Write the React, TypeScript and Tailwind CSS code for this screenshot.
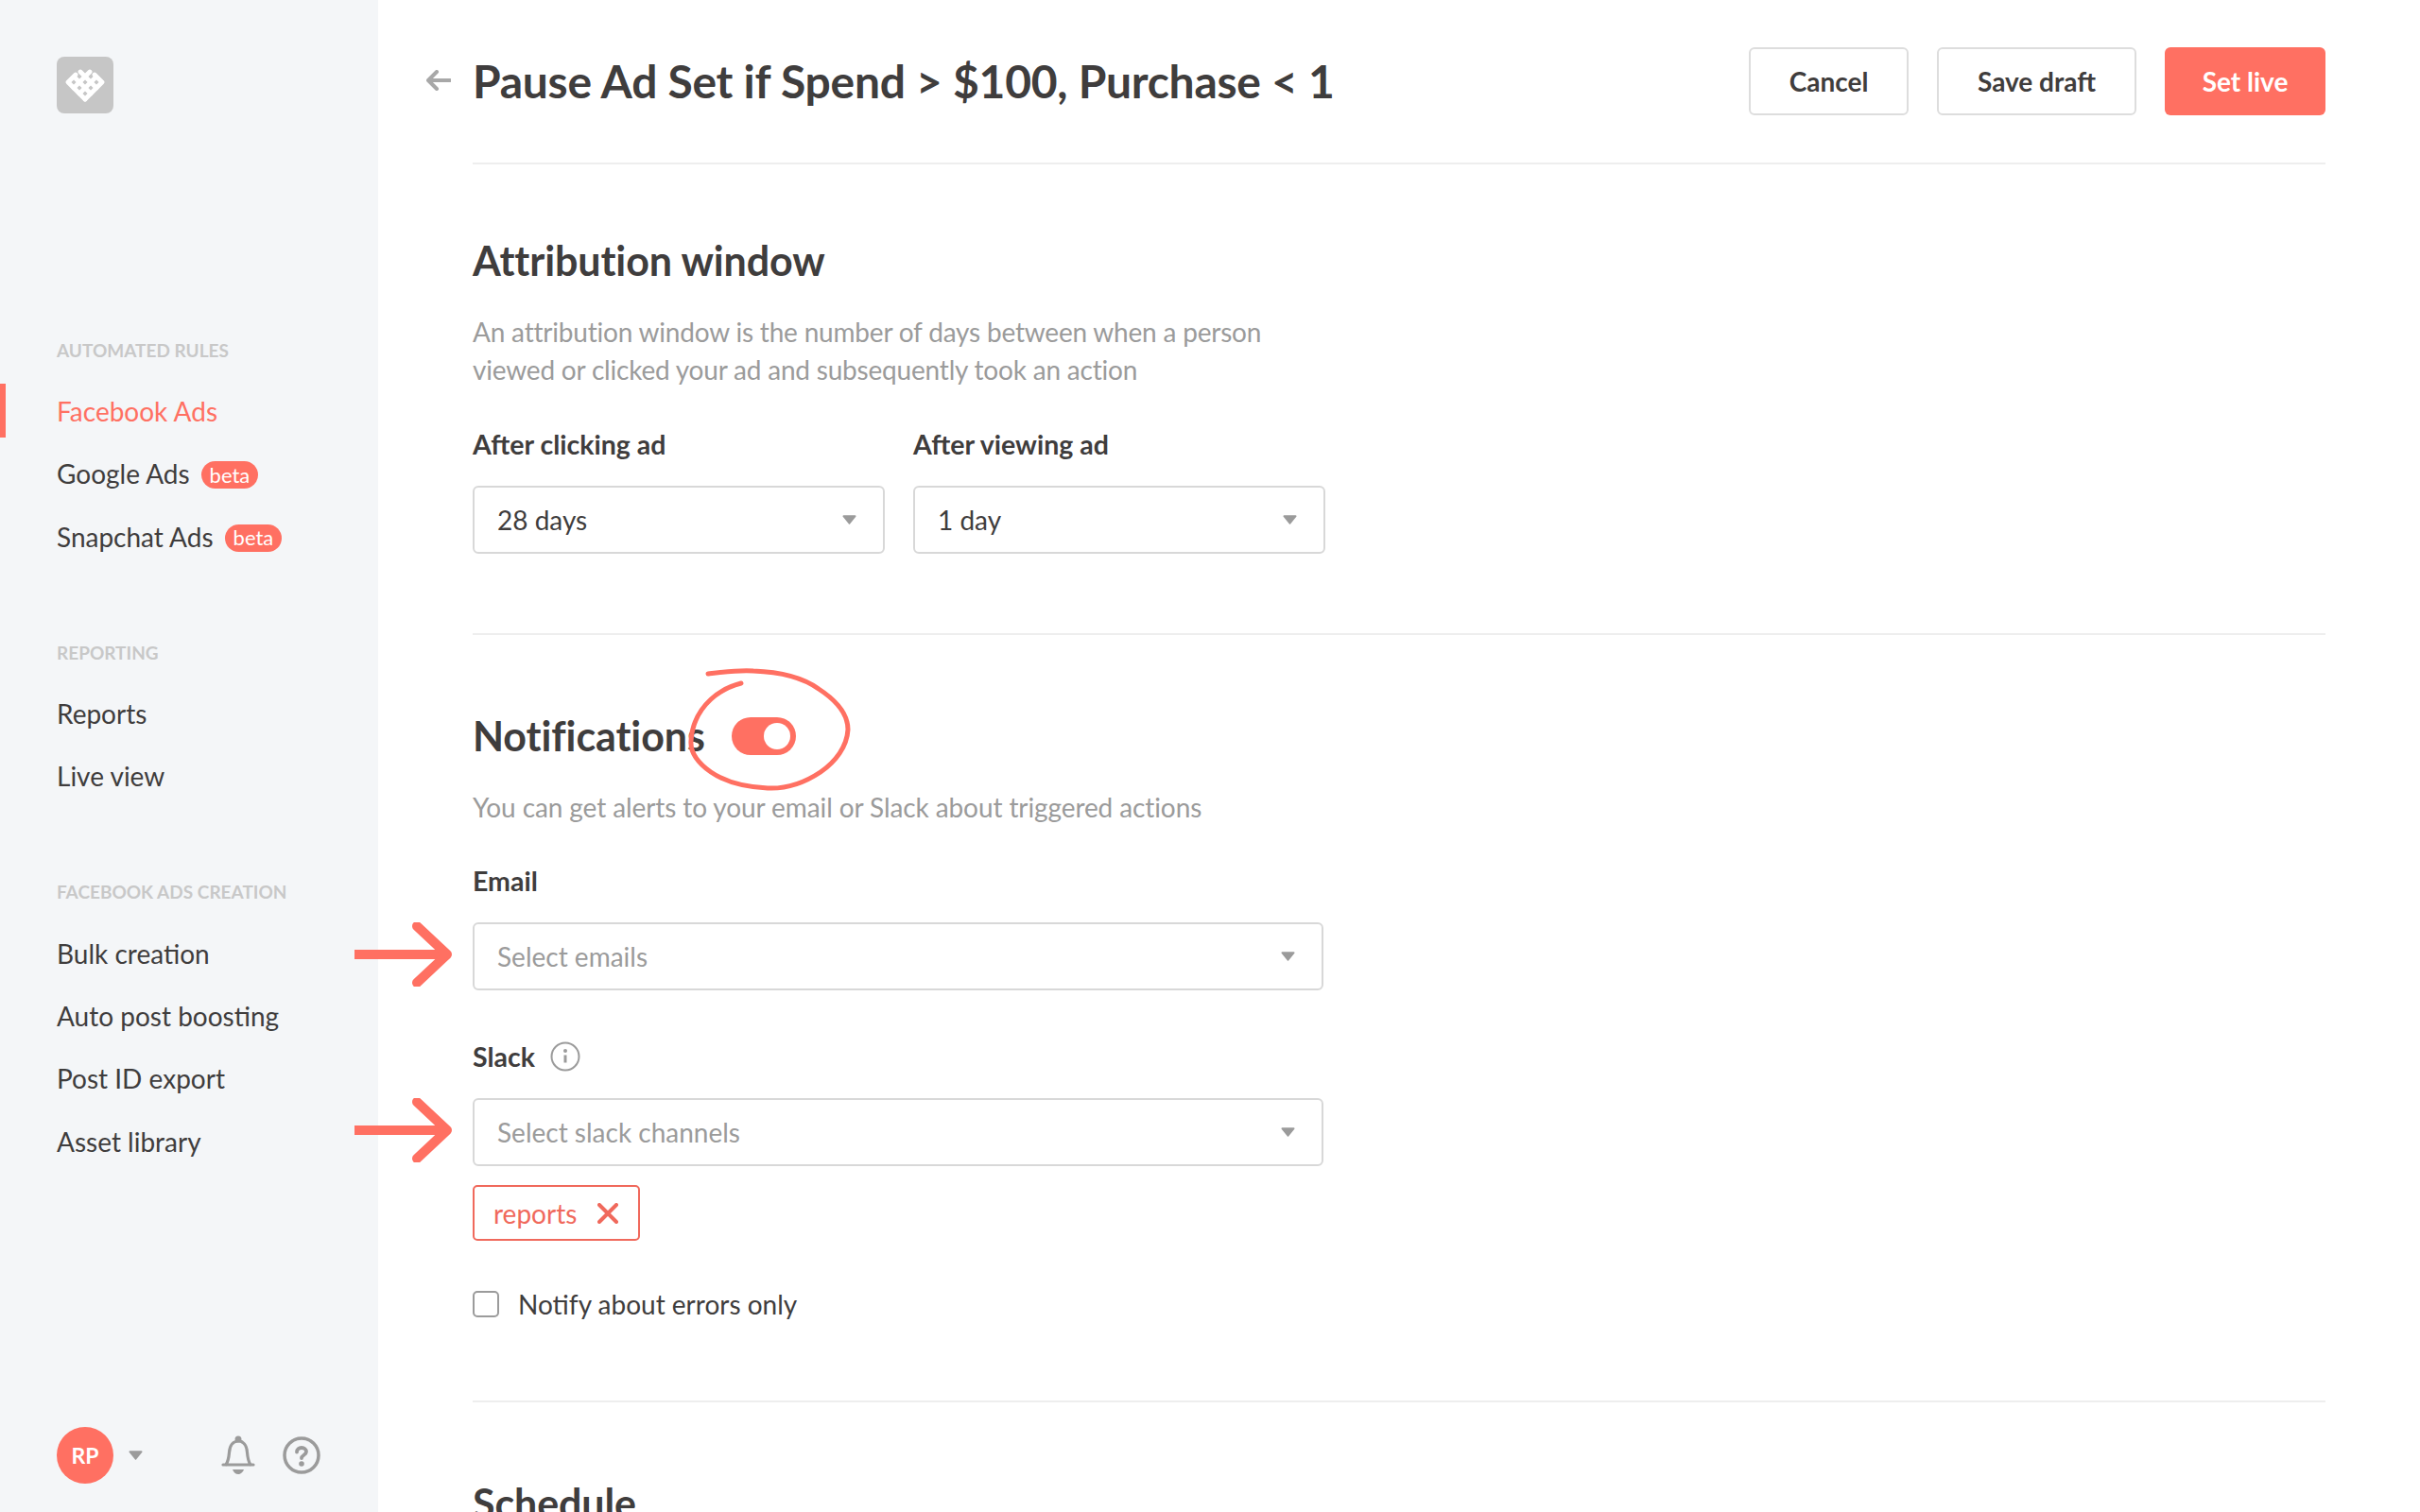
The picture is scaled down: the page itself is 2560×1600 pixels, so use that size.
import { ReactNode } from "react";

const Caret = ({ className = "" }: { className?: string }) => (
  <svg className={className} width="15" height="12" viewBox="0 0 16 12" aria-hidden="true">
    <path d="M1.500 1h13a1 1 0 0 1 .8 1.600L8.800 10.600a1 1 0 0 1-1.600 0L.7 2.600A1 1 0 0 1 1.500 1z" fill="#9b9b9b" />
  </svg>
);

const Logo = () => (
  <div className="w-[60px] h-[60px] rounded-[8px] bg-[#c6c6c6] flex items-center justify-center">
    <svg width="42" height="36" viewBox="0 0 42 36" fill="none" aria-hidden="true">
      <g stroke="#fff" strokeWidth="4.800" strokeLinecap="round">
        <path d="M21 33 3 15M27 27 10 10M33 21 16 4M38 14l-7-7" />
        <path d="M21 33 39 15M15 27 32 10M9 21 26 4M4 14l7-7" />
      </g>
    </svg>
  </div>
);

const Beta = () => (
  <span className="ml-[12px] mt-[3px] inline-flex items-center justify-center h-[29px] px-[9px] rounded-full bg-[#ff7062] text-white text-[22px] leading-none">
    beta
  </span>
);

function NavGroup({ title, items, active }: { title: string; items: { label: string; beta?: boolean }[]; active?: string }) {
  return (
    <div>
      <div className="h-[24px] leading-[24px] pl-[60px] text-[19px] font-bold text-[#c8c8c8] uppercase">{title}</div>
      <ul className="mt-[19px] flex flex-col">
        {items.map((item) => (
          <li
            key={item.label}
            className={`h-[66.300px] pl-[60px] flex items-center text-[28px] relative ${
              item.label === active ? "text-[#ff7062]" : "text-[#3f3d3d]"
            }`}
          >
            {item.label === active && <span className="absolute left-0 top-[4px] w-[6px] h-[57px] bg-[#ff7062]" />}
            {item.label}
            {item.beta && <Beta />}
          </li>
        ))}
      </ul>
    </div>
  );
}

function Sidebar() {
  return (
    <aside className="w-[400px] shrink-0 h-full bg-[#f4f6f8] flex flex-col">
      <div className="pl-[60px] pt-[60px]">
        <Logo />
      </div>
      <nav className="mt-[239px] flex flex-col gap-[78px]">
        <NavGroup
          title="Automated rules"
          active="Facebook Ads"
          items={[{ label: "Facebook Ads" }, { label: "Google Ads", beta: true }, { label: "Snapchat Ads", beta: true }]}
        />
        <NavGroup title="Reporting" items={[{ label: "Reports" }, { label: "Live view" }]} />
        <NavGroup
          title="Facebook ads creation"
          items={[{ label: "Bulk creation" }, { label: "Auto post boosting" }, { label: "Post ID export" }, { label: "Asset library" }]}
        />
      </nav>
      <div className="mt-auto pb-[30px] pl-[60px] flex items-center">
        <div className="w-[60px] h-[60px] rounded-full bg-[#ff7062] text-white text-[23px] font-bold flex items-center justify-center">RP</div>
        <Caret className="ml-[16px]" />
        <svg className="ml-[83px]" width="36" height="42" viewBox="0 0 36 42" fill="none" aria-hidden="true">
          <circle cx="18" cy="4" r="3.500" fill="#9b9b9b" />
          <path d="M2 31h32M5 31c2-3 3-7 3.500-13C9 10 13 6 18 6s9 4 9.500 12c.5 6 1.500 10 3.500 13" stroke="#9b9b9b" strokeWidth="3.200" strokeLinecap="round" strokeLinejoin="round" />
          <path d="M12 36h12c-1 3-3.500 5-6 5s-5-2-6-5z" fill="#9b9b9b" />
        </svg>
        <svg className="ml-[29px]" width="40" height="40" viewBox="0 0 40 40" fill="none" aria-hidden="true">
          <circle cx="20" cy="20" r="18" stroke="#9b9b9b" strokeWidth="3.500" />
          <path d="M15 16.500c0-2.800 2.200-4.500 5-4.500s5 1.700 5 4.200c0 3.500-5 3.500-5 6.800" stroke="#9b9b9b" strokeWidth="3.800" strokeLinecap="round" />
          <circle cx="20" cy="29" r="2.800" fill="#9b9b9b" />
        </svg>
      </div>
    </aside>
  );
}

function Select({ value, placeholder, className = "" }: { value: string; placeholder?: boolean; className?: string }) {
  return (
    <div className={`h-[72px] border-2 border-[#d8d8d8] rounded-[6px] bg-white pl-[24px] pr-[28px] flex items-center justify-between text-[28px] ${placeholder ? "text-[#9b9b9b]" : "text-[#3f3d3d]"} ${className}`}>
      <span>{value}</span>
      <Caret />
    </div>
  );
}

const Label = ({ children }: { children: ReactNode }) => (
  <div className="h-[36px] leading-[36px] text-[28.500px] font-bold text-[#3f3d3d]">{children}</div>
);

const SectionTitle = ({ children }: { children: ReactNode }) => (
  <h2 className="h-[56px] leading-[56px] text-[43px] tracking-[-0.1px] font-bold text-[#3f3d3d]">{children}</h2>
);

const Arrow = () => (
  <svg className="absolute left-[-125px] top-[0px]" width="106" height="68" viewBox="0 0 106 68" fill="none" aria-hidden="true">
    <path d="M0 34h96" stroke="#ff7062" strokeWidth="10" />
    <path d="M66 4l32 30-32 30" stroke="#ff7062" strokeWidth="10" strokeLinecap="round" strokeLinejoin="round" />
  </svg>
);

export default function App() {
  return (
    <div className="relative w-full h-screen overflow-hidden flex bg-white font-['Lato',sans-serif]">
      <Sidebar />
      <main className="flex-1 min-w-0 pl-[100px] pr-[100px]">
        <header className="h-[174px] border-b-2 border-[#eeeeee] pt-[50px] relative">
          <div className="flex items-start justify-between">
            <div className="h-[72px] flex items-center relative">
              <svg className="absolute left-[-49px] top-[24px]" width="26" height="22" viewBox="0 0 26 22" fill="none" aria-hidden="true">
                <path d="M25 11H3M11 2l-9 9 9 9" stroke="#a8a8a8" strokeWidth="4" strokeLinecap="round" strokeLinejoin="round" />
              </svg>
              <h1 className="text-[48px] tracking-[-0.27px] font-bold text-[#3f3d3d]">Pause Ad Set if Spend &gt; $100, Purchase &lt; 1</h1>
            </div>
            <div className="flex gap-[30px] text-[28px] font-bold">
              <button className="w-[169px] h-[72px] pb-[1px] border-2 border-[#dddddd] rounded-[6px] text-[#3f3d3d]">Cancel</button>
              <button className="w-[211px] h-[72px] pb-[1px] border-2 border-[#dddddd] rounded-[6px] text-[#3f3d3d]">Save draft</button>
              <button className="w-[170px] h-[72px] pb-[1px] rounded-[6px] bg-[#ff7062] text-white">Set live</button>
            </div>
          </div>
        </header>

        <section className="pt-[74px] pb-[84px] border-b-2 border-[#eeeeee]">
          <SectionTitle>Attribution window</SectionTitle>
          <p className="mt-[27px] w-[900px] text-[28px] tracking-[-0.2px] leading-[40px] text-[#9b9b9b]">
            An attribution window is the number of days between when a person viewed or clicked your ad and subsequently took an action
          </p>
          <div className="mt-[41px] flex gap-[30px]">
            <div className="w-[436px]">
              <Label>After clicking ad</Label>
              <Select className="mt-[26px]" value="28 days" />
            </div>
            <div className="w-[436px]">
              <Label>After viewing ad</Label>
              <Select className="mt-[26px]" value="1 day" />
            </div>
          </div>
        </section>

        <section className="pt-[79px] pb-[82px] border-b-2 border-[#eeeeee]">
          <div className="flex items-center">
            <SectionTitle>Notifications</SectionTitle>
            <div className="ml-[28px] w-[68px] h-[40px] rounded-full bg-[#ff7062] flex items-center justify-end pr-[6px]">
              <span className="w-[28px] h-[28px] rounded-full bg-white" />
            </div>
          </div>
          <p className="mt-[27px] text-[28px] tracking-[-0.1px] leading-[40px] text-[#9b9b9b]">You can get alerts to your email or Slack about triggered actions</p>

          <div className="mt-[40px] w-[900px]">
            <Label>Email</Label>
            <div className="relative mt-[26px]">
              <Arrow />
              <Select value="Select emails" placeholder />
            </div>
          </div>

          <div className="mt-[52px] w-[900px]">
            <div className="flex items-center gap-[16px]">
              <Label>Slack</Label>
              <svg width="32" height="32" viewBox="0 0 32 32" fill="none" aria-hidden="true">
                <circle cx="16" cy="16" r="14.500" stroke="#9b9b9b" strokeWidth="2" />
                <circle cx="16" cy="10" r="2" fill="#9b9b9b" />
                <path d="M16 14.500v8" stroke="#9b9b9b" strokeWidth="3" />
              </svg>
            </div>
            <div className="relative mt-[26px]">
              <Arrow />
              <Select value="Select slack channels" placeholder />
            </div>
          </div>

          <div className="mt-[20px] inline-flex items-center h-[59px] w-[177px] border-2 border-[#f0695c] rounded-[5px] pl-[20px] text-[28px] text-[#f0695c]">
            reports
            <svg className="ml-[22px]" width="22" height="22" viewBox="0 0 22 22" fill="none" aria-hidden="true">
              <path d="M2 2l18 18M20 2 2 20" stroke="#f0695c" strokeWidth="4" strokeLinecap="round" />
            </svg>
          </div>

          <label className="mt-[47px] h-[40px] flex items-center gap-[20px] text-[28px] text-[#3f3d3d]">
            <span className="w-[28px] h-[28px] border-2 border-[#9b9b9b] rounded-[5px]" />
            Notify about errors only
          </label>
        </section>

        <section className="pt-[79px]">
          <SectionTitle>Schedule</SectionTitle>
        </section>
      </main>

      {/* hand drawn ring over the toggle */}
      <svg className="absolute left-[725px] top-[705px]" width="180" height="135" viewBox="725 705 180 135" fill="none" aria-hidden="true">
        <path
          d="M749 713C765 711 780 709 797 710C825 711 848 716 866 729C886 742 897 757 897 772C896 790 884 806 868 817C850 829 832 835 812 834C790 833 768 828 752 817C738 807 730 797 731 784C732 767 739 752 752 740C762 731 772 726 784 723"
          stroke="#ff7062"
          strokeWidth="5"
          strokeLinecap="round"
        />
      </svg>
    </div>
  );
}
